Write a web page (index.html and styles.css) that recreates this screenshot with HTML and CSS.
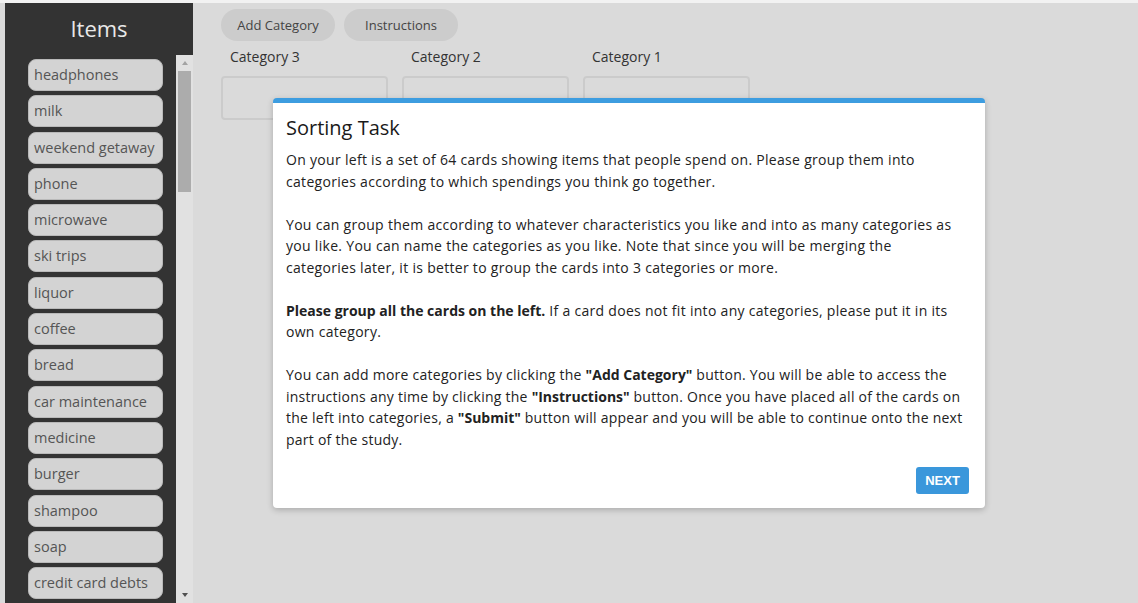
FILE: index.html
```html
<!DOCTYPE html>
<html lang="en">
<head>
<meta charset="utf-8">
<title>Sorting Task</title>
<link rel="stylesheet" href="styles.css">
</head>
<body>
<div class="page">
  <aside class="sidebar">
    <h2 class="sidebar-title">Items</h2>
    <div class="deck">
      <div class="deck-list">
        <div class="card">headphones</div>
        <div class="card">milk</div>
        <div class="card">weekend getaway</div>
        <div class="card">phone</div>
        <div class="card">microwave</div>
        <div class="card">ski trips</div>
        <div class="card">liquor</div>
        <div class="card">coffee</div>
        <div class="card">bread</div>
        <div class="card">car maintenance</div>
        <div class="card">medicine</div>
        <div class="card">burger</div>
        <div class="card">shampoo</div>
        <div class="card">soap</div>
        <div class="card">credit card debts</div>
      </div>
      <div class="scrollbar">
        <div class="scroll-btn"><span class="arrow-up"></span></div>
        <div class="scroll-track"><div class="scroll-thumb"></div></div>
        <div class="scroll-btn"><span class="arrow-down"></span></div>
      </div>
    </div>
  </aside>

  <main class="board">
    <div class="toolbar">
      <button class="pill">Add Category</button>
      <button class="pill">Instructions</button>
    </div>
    <div class="categories">
      <div class="category">
        <div class="category-name">Category 3</div>
        <div class="drop"></div>
      </div>
      <div class="category">
        <div class="category-name">Category 2</div>
        <div class="drop"></div>
      </div>
      <div class="category">
        <div class="category-name">Category 1</div>
        <div class="drop"></div>
      </div>
    </div>

    <div class="dialog">
      <h3 class="dialog-title">Sorting Task</h3>
      <div class="dialog-body">
        <p>On your left is a set of 64 cards showing items that people spend on. Please group them into categories according to which spendings you think go together.</p>
        <p>You can group them according to whatever characteristics you like and into as many categories as you like. You can name the categories as you like. Note that since you will be merging the categories later, it is better to group the cards into 3 categories or more.</p>
        <p><b>Please group all the cards on the left.</b> If a card does not fit into any categories, please put it in its own category.</p>
        <p class="howto">You can add more categories by clicking the <b>"Add Category"</b> button. You will be able to access the instructions any time by clicking the <b>"Instructions"</b> button. Once you have placed all of the cards on the left into categories, a <b>"Submit"</b> button will appear and you will be able to continue onto the next part of the study.</p>
      </div>
      <div class="dialog-actions">
        <button class="btn-next">NEXT</button>
      </div>
    </div>
  </main>
</div>
</body>
</html>
```

FILE: styles.css
```css
html, body {
  margin: 0;
  padding: 0;
  height: 100%;
}

body {
  background: #f2f2f2;
  font-family: "Open Sans", "Noto Sans", sans-serif;
  overflow: hidden;
}

.page {
  display: flex;
  height: 600px;
  margin-top: 3px;
  padding-left: 5px;
  background: #dadada;
}

/* left column with the card deck */
.sidebar {
  width: 188px;
  flex: none;
  background: #333333;
  display: flex;
  flex-direction: column;
}

.sidebar-title {
  margin: 0;
  height: 52px;
  line-height: 50px;
  text-align: center;
  color: #e8e8e8;
  font-weight: 400;
  font-size: 22px;
}

.deck {
  flex: 1;
  display: flex;
  min-height: 0;
}

.deck-list {
  flex: 1;
  overflow: hidden;
  padding: 4px 13px 0 23px;
}

.card {
  box-sizing: border-box;
  height: 32px;
  margin-bottom: 4.3px;
  padding-left: 5px;
  line-height: 30px;
  background: #d3d3d3;
  border: 1px solid #b9b9b9;
  border-radius: 8px;
  color: #555;
  font-size: 14.5px;
  white-space: nowrap;
}

.scrollbar {
  width: 17px;
  flex: none;
  background: #e1e1e1;
  display: flex;
  flex-direction: column;
}

.scroll-btn {
  height: 16px;
  display: flex;
  align-items: center;
  justify-content: center;
}

.arrow-up, .arrow-down {
  width: 0;
  height: 0;
  border-left: 3.5px solid transparent;
  border-right: 3.5px solid transparent;
}

.arrow-up { border-bottom: 4px solid #a3a3a3; }
.arrow-down { border-top: 4px solid #505050; }

.scroll-track {
  flex: 1;
  padding: 0 2px;
}

.scroll-thumb {
  height: 121px;
  background: #acacac;
}

/* board with categories */
.board {
  flex: 1;
  position: relative;
  padding: 6px 0 0 28px;
}

.toolbar {
  display: flex;
  gap: 9px;
}

.pill {
  width: 114px;
  height: 32px;
  border: none;
  border-radius: 16px;
  background: #cccccc;
  color: #444;
  font-family: inherit;
  font-size: 13px;
  padding: 0;
}

.categories {
  display: flex;
  gap: 14px;
  margin-top: 5px;
}

.category {
  width: 167px;
}

.category-name {
  padding-left: 9px;
  height: 30px;
  line-height: 22px;
  font-size: 14px;
  color: #333;
}

.drop {
  box-sizing: border-box;
  height: 44px;
  border: 2px solid #cbcbcb;
  border-radius: 4px;
}

/* instructions dialog */
.dialog {
  position: absolute;
  left: 80px;
  top: 95px;
  width: 712px;
  height: 410px;
  box-sizing: border-box;
  background: #fff;
  border-top: 5px solid #3d9de0;
  border-radius: 4px;
  box-shadow: 0 2px 6px rgba(0, 0, 0, 0.22);
  padding: 10px 12px 0 13px;
  display: flex;
  flex-direction: column;
}

.dialog-title {
  margin: 0;
  font-size: 20px;
  font-weight: 400;
  color: #1a1a1a;
  line-height: 30px;
}

.dialog-body {
  margin-top: 6px;
  padding-right: 9px;
  font-size: 14px;
  line-height: 21.5px;
  letter-spacing: 0.3px;
  color: #222;
}

.dialog-body b {
  letter-spacing: 0;
}

.dialog-body p {
  margin: 0 0 21.5px;
}

.dialog-body p.howto {
  letter-spacing: 0.25px;
}

.dialog-body p:last-child {
  margin-bottom: 0;
}

.dialog-actions {
  margin-top: auto;
  padding: 0 4px 14px 0;
  display: flex;
  justify-content: flex-end;
}

.btn-next {
  width: 53px;
  height: 27px;
  border: none;
  border-radius: 3px;
  background: #3a97db;
  color: #fff;
  font-family: "Liberation Sans", Arial, sans-serif;
  font-weight: 700;
  font-size: 13px;
  padding: 0;
}
```
